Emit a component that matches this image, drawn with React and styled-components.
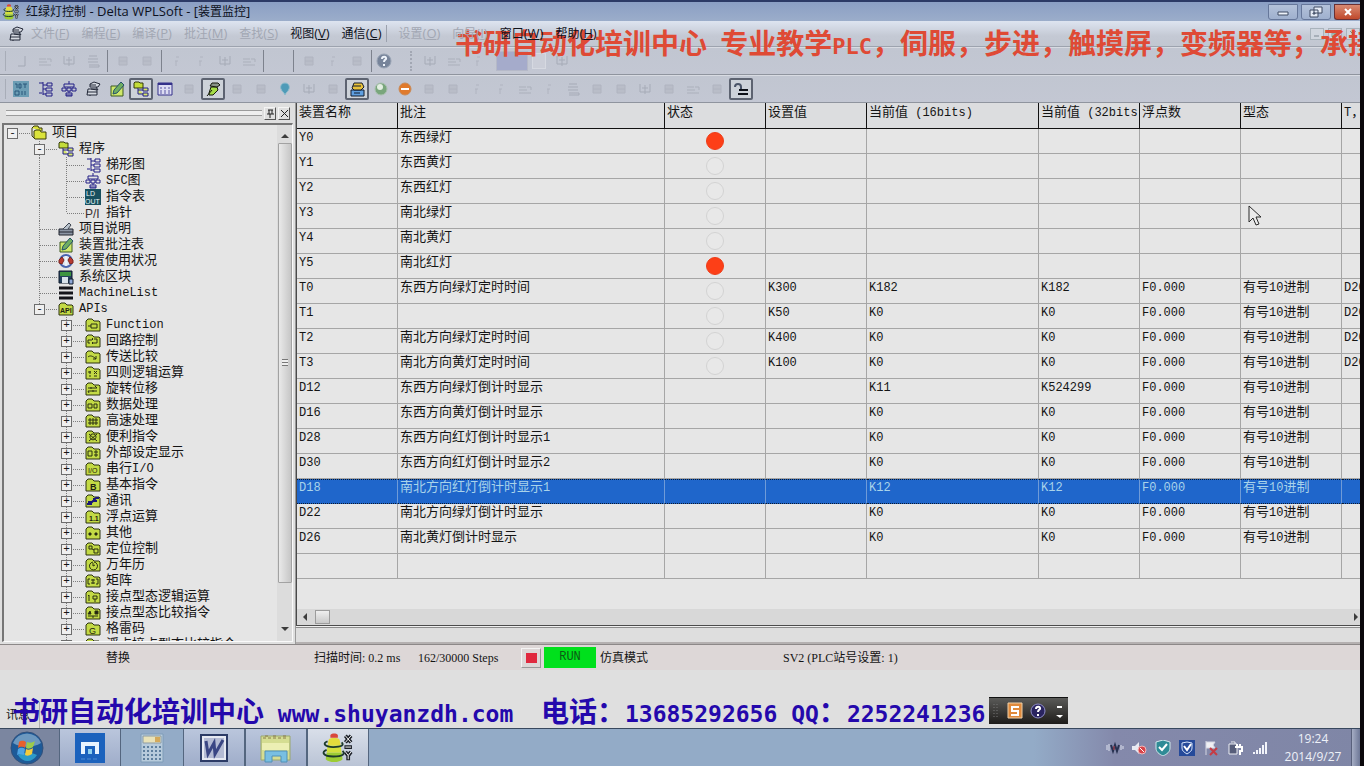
import React from 'react'
import styled, { createGlobalStyle, css } from 'styled-components'

const SONG = `'Liberation Mono', 'Noto Sans CJK SC', monospace`
const BOLD = `'DejaVu Sans Mono', 'Noto Sans CJK SC', monospace`
const UI = `'Open Sans', 'Noto Sans CJK SC', sans-serif`
const TIMES = `'Liberation Serif', 'Noto Sans CJK SC', serif`

/* ---------- data ---------- */

const menus = [
    { label: '文件', keyName: 'F', off: true },
    { label: '编程', keyName: 'E', off: true },
    { label: '编译', keyName: 'P', off: true },
    { label: '批注', keyName: 'M', off: true },
    { label: '查找', keyName: 'S', off: true },
    { label: '视图', keyName: 'V' },
    { label: '通信', keyName: 'C', split: true },
    { label: '设置', keyName: 'O', off: true },
    { label: '向导', keyName: 'I', off: true },
    { label: '窗口', keyName: 'W' },
    { label: '帮助', keyName: 'H' },
]

const tree = {
    label: '项目',
    icon: 'folders',
    children: [
        {
            label: '程序',
            icon: 'program',
            children: [
                { label: '梯形图', icon: 'ladder' },
                { label: 'SFC图', icon: 'sfc' },
                { label: '指令表', icon: 'list' },
                { label: '指针', icon: 'pointer' },
            ],
        },
        { label: '项目说明', icon: 'note' },
        { label: '装置批注表', icon: 'pencil' },
        { label: '装置使用状况', icon: 'usage' },
        { label: '系统区块', icon: 'block' },
        { label: 'MachineList', icon: 'bars' },
        {
            label: 'APIs',
            icon: 'api',
            children: [
                { label: 'Function', icon: 'function' },
                { label: '回路控制', icon: 'loop' },
                { label: '传送比较', icon: 'move' },
                { label: '四则逻辑运算', icon: 'math' },
                { label: '旋转位移', icon: 'shift' },
                { label: '数据处理', icon: 'data' },
                { label: '高速处理', icon: 'fast' },
                { label: '便利指令', icon: 'handy' },
                { label: '外部设定显示', icon: 'display' },
                { label: '串行I/O', icon: 'serial' },
                { label: '基本指令', icon: 'basic' },
                { label: '通讯', icon: 'comm' },
                { label: '浮点运算', icon: 'float' },
                { label: '其他', icon: 'other' },
                { label: '定位控制', icon: 'position' },
                { label: '万年历', icon: 'clock' },
                { label: '矩阵', icon: 'matrix' },
                { label: '接点型态逻辑运算', icon: 'logic' },
                { label: '接点型态比较指令', icon: 'compare' },
                { label: '格雷码', icon: 'gray' },
                { label: '浮点接点型态比较指令', icon: 'compare' },
            ].map((item) => ({ ...item, closed: true })),
        },
    ],
}

const columns = [
    { label: '装置名称', width: 101 },
    { label: '批注', width: 267 },
    { label: '状态', width: 101 },
    { label: '设置值', width: 101 },
    { label: '当前值 (16bits)', width: 172 },
    { label: '当前值 (32bits)', width: 101 },
    { label: '浮点数', width: 101 },
    { label: '型态', width: 101 },
    { label: 'T，' },
]

const F = 'F0.000'
const DEC = '有号10进制'
// name, comment, lamp, preset, 16 bits, 32 bits, float, format, T
const rows = [
    ['Y0', '东西绿灯', 'on', '', '', '', '', '', ''],
    ['Y1', '东西黄灯', 'off', '', '', '', '', '', ''],
    ['Y2', '东西红灯', 'off', '', '', '', '', '', ''],
    ['Y3', '南北绿灯', 'off', '', '', '', '', '', ''],
    ['Y4', '南北黄灯', 'off', '', '', '', '', '', ''],
    ['Y5', '南北红灯', 'on', '', '', '', '', '', ''],
    ['T0', '东西方向绿灯定时时间', 'off', 'K300', 'K182', 'K182', F, DEC, 'D20'],
    ['T1', '', 'off', 'K50', 'K0', 'K0', F, DEC, 'D20'],
    ['T2', '南北方向绿灯定时时间', 'off', 'K400', 'K0', 'K0', F, DEC, 'D20'],
    ['T3', '南北方向黄灯定时时间', 'off', 'K100', 'K0', 'K0', F, DEC, 'D20'],
    ['D12', '东西方向绿灯倒计时显示', '', '', 'K11', 'K524299', F, DEC, ''],
    ['D16', '东西方向黄灯倒计时显示', '', '', 'K0', 'K0', F, DEC, ''],
    ['D28', '东西方向红灯倒计时显示1', '', '', 'K0', 'K0', F, DEC, ''],
    ['D30', '东西方向红灯倒计时显示2', '', '', 'K0', 'K0', F, DEC, ''],
    ['D18', '南北方向红灯倒计时显示1', '', '', 'K12', 'K12', F, DEC, ''],
    ['D22', '南北方向绿灯倒计时显示', '', '', 'K0', 'K0', F, DEC, ''],
    ['D26', '南北黄灯倒计时显示', '', '', 'K0', 'K0', F, DEC, ''],
    ['', '', '', '', '', '', '', '', ''],
]
const SELECTED = 'D18'

const fileTools = [
    ['new', 'open', 'save', 'print'],
    ['lines', 'lines'],
    ['dot', 'dot', 'save', 'open'],
    ['blank'],
    ['lines', 'dot', 'lines'],
    ['help'],
]
const viewTools = [
    'code', 'ladder', 'sfc', 'monitor', 'pencil', 'program!', 'grid', 'lines', 'pen!',
    'lines', 'lines', 'drop', 'save', 'lines', 'device!', 'run', 'stop', 'lines',
    'lines', 'dot', 'dot', 'open', 'dot', 'print', 'lines', 'lines', 'save',
    'lines', 'open', 'lines', 'contact!',
]

/* ---------- drawings ---------- */

const folderMarks = {
    api: <text x="2" y="12" fontSize="7" fontWeight="700">API</text>,
    function: <path d="M3 9h3M6 7h6v4H6z" />,
    loop: <path d="M5 10H3V7h4M9 6h3v4H8M7 9l1 1-1 1M8 5L7 6l1 1" />,
    move: <path d="M3 8c2-2 5-1 8 2M11 7v3H8" />,
    math: <path d="M3 7h3M5 6v3M9 6l3 3M12 6l-3 3M4 11h2M9 11h3" />,
    shift: <path d="M3 7h9M10 5l2 2M3 10h9M4 12l-1-2M6 6v2M8 9v2" />,
    data: <path d="M3 7h4v4H3zM9 7h3v4H9z" />,
    fast: <path d="M3 7h10M3 10h10M5 5v7M8 5v7M11 5v7" />,
    handy: <path d="M7 5a3 3 0 1 0 2 0zM4 5l8 7M12 5l-8 7" />,
    display: <path d="M3 6h4v5H3zM9 7h4M9 10h4M11 5v7" />,
    serial: <text x="3" y="12" fontSize="7">I/O</text>,
    basic: <text x="5" y="13" fontSize="9" fontWeight="700">B</text>,
    comm: <path d="M2 11h3l3-3 3-3h3M3 9h3v3M9 5v3h3" stroke="#1b1878" strokeWidth="2" />,
    float: <text x="4" y="12" fontSize="7" fontWeight="700">1.1</text>,
    other: <path d="M4 8h2v2H4zM10 8h2v2h-2z" fill="#221" />,
    position: <path d="M4 5h3v3H4zM9 8h4v4H9zM7 8l2 1" />,
    clock: <path d="M8 5a4 4 0 1 0 1 0M8 6v3l2-1" />,
    matrix: <path d="M5 6H3v5h2M11 6h2v5h-2M6 7h4M6 10h4M8 6v5" />,
    logic: <path d="M4 6v6M4 6L3 7M8 7h4v3H8zM10 10v3" />,
    compare: <path d="M3 9l2-3 1 3zM10 6h3v3h-3zM3 11h10M8 11v2" fill="#221" />,
    gray: <text x="4" y="13" fontSize="9">G</text>,
}

const ladderArt = (
    <path d="M2 2h4M6 1v13M6 4h4M10 2h5v3h-5zM6 8h3M9 7h6v3H9zM6 13h3M9 12h6v3H9zM2 12h3" stroke="#231f86" fill="none" />
)
const sfcArt = (
    <path d="M8 0v3M3 3h10v3H3zM1 7h4v3H1zM6 7h4v3H6zM11 7h4v3h-4zM8 10v2M5 12h6v3H5zM5 14h6" stroke="#231f86" fill="none" />
)
const pencilArt = (
    <>
        <path d="M2 5h12v10H2z" fill="#cfe86a" stroke="#3c5a20" />
        <path d="M4 13l1-4 7-8 3 3-7 8z" fill="#6fae62" stroke="#24506a" />
    </>
)
const programArt = (
    <>
        <path d="M1 2l1-1h4l1 1h3v5H1z" fill="#c4dc3a" stroke="#33390c" />
        <path d="M5 7v6h5M5 9h5M10 7h5v3h-5zM10 12h5v3h-5z" fill="#d8e86a" stroke="#231f86" />
    </>
)
const monitorArt = (
    <>
        <path d="M3 8h9v6H2zM5 6h8l2-3-6-2-4 2z" fill="#d6dae2" stroke="#222838" />
        <path d="M5 4h6M6 8l6 1M2 11h10M5 14v1M11 6l2 3" stroke="#222838" fill="none" />
    </>
)

const drawings = {
    ladder: ladderArt,
    sfc: sfcArt,
    pencil: pencilArt,
    program: programArt,
    monitor: monitorArt,
    folders: (
        <path d="M1 3l2-2h4l1 2h3v3M1 3v8l2 2V6l2-1h4l1 2h5v7H4l-3-3" fill="#dbe33a" stroke="#3a3b08" />
    ),
    list: (
        <>
            <path d="M0 0h16v16H0z" fill="#17505f" />
            <text x="1" y="7" fontSize="7" fontFamily="Liberation Sans" fill="#e6f4f4">LD</text>
            <text x="0" y="15" fontSize="7" fontFamily="Liberation Sans" fill="#e6f4f4">OUT</text>
        </>
    ),
    pointer: <text x="0" y="13" fontSize="12" fontFamily="Liberation Sans" fill="#3a3030">P/I</text>,
    note: (
        <>
            <path d="M1 8h14v6H1zM1 11h14" fill="#8b95a4" stroke="#20242e" />
            <path d="M5 8l6-6 2 2-3 4" fill="#b8c2cc" stroke="#3c4450" />
        </>
    ),
    usage: (
        <>
            <circle cx="8" cy="8" r="6" fill="#dfe6f2" stroke="#4a64b0" strokeWidth="2" />
            <path d="M1 7l3-3 2 3-2 4-3-1zM15 7l-3-3-2 3 2 4 3-1z" fill="#b83a32" stroke="#7a2620" />
            <path d="M8 3v10" stroke="#fff" />
        </>
    ),
    block: (
        <>
            <path d="M1 2h13v12H1z" fill="#24405e" stroke="#101c2c" />
            <path d="M2 3h11v4H2z" fill="#3c9440" />
            <path d="M4 8h6v6H4z" fill="#d8e2ea" />
            <path d="M11 10h4v5h-4z" fill="#8fa8d8" stroke="#101c2c" />
        </>
    ),
    bars: <path d="M1 3h14M1 8h14M1 13h14" stroke="#15151a" strokeWidth="3" />,
    code: (
        <>
            <path d="M0 0h16v16H0z" fill="#6c9db4" />
            <path d="M2 3h2v4M6 3h2v4H6zM10 3h4M12 3v4M2 10h4v4H2zM9 10v4M12 10v4" stroke="#29567a" fill="none" />
        </>
    ),
    grid: (
        <>
            <path d="M1 2h14v12H1z" fill="#dcdcf2" stroke="#34318a" />
            <path d="M1 3h14" stroke="#34318a" strokeWidth="2" />
            <path d="M3 7h10M3 10h10M3 12h10" stroke="#5a57a4" strokeDasharray="2 2" />
        </>
    ),
    pen: (
        <>
            <path d="M4 12l2-6h6l1 3-5 5H4z" fill="#a4dc46" stroke="#15180c" />
            <path d="M5 5l2-3h6l2 2-3 2z" fill="#8a9488" stroke="#15180c" />
            <path d="M2 15l5-6" stroke="#15180c" fill="none" />
        </>
    ),
    drop: <path d="M8 2c4 0 5 4 4 6-1 3-3 3-4 6-1-3-3-3-4-6C3 6 4 2 8 2z" fill="#4f9bb8" stroke="#8fbccc" />,
    device: (
        <>
            <path d="M2 9h13v6H2z" fill="#5f9fe0" stroke="#141c2c" />
            <path d="M3 7l2-5h8l2 4-3 3H5z" fill="#e8c23a" stroke="#141c2c" />
            <path d="M4 5h8M5 12h6" stroke="#141c2c" />
        </>
    ),
    run: (
        <>
            <circle cx="8" cy="8" r="6" fill="#79a67c" stroke="#a8bfae" />
            <circle cx="7" cy="6" r="3" fill="#e3efe2" />
        </>
    ),
    stop: (
        <>
            <circle cx="8" cy="8" r="6" fill="#e07a2c" stroke="#c98a58" />
            <path d="M4 8h8" stroke="#fff" strokeWidth="2" />
        </>
    ),
    contact: (
        <>
            <path d="M2 6c0-4 6-4 6 0v2" fill="none" stroke="#4a5468" strokeWidth="2" />
            <path d="M6 9h9M5 13h10" stroke="#0d1018" strokeWidth="2" />
        </>
    ),
    help: (
        <>
            <circle cx="8" cy="8" r="7" fill="#77849a" stroke="#98a3b4" />
            <path d="M6 6c0-3 5-3 4 0-1 1-2 1-2 3M8 11v2" stroke="#eef3fa" strokeWidth="2" fill="none" />
        </>
    ),
    // greyed commands
    new: <path d="M12 3v10H5" fill="none" stroke="#a3a8b4" />,
    open: <path d="M2 6h7M2 9h8M2 12h12M10 6h4v3" fill="none" stroke="#abb0bb" />,
    save: <path d="M3 3v8h10V3M8 4v9M5 7h6" fill="none" stroke="#a6abb7" />,
    print: <path d="M4 3h8M3 6h10M3 9h10M4 12h10v2H4" fill="none" stroke="#a6abb7" />,
    lines: <path d="M4 4h8v8H4zM4 8h8" fill="#b9bdc8" stroke="#b0b4c0" />,
    dot: <path d="M7 4h3M6 8h3M7 8v5" fill="none" stroke="#b0b4c0" />,
    blank: null,
}

const Icon = ({ name }) => (
    <Glyph viewBox="0 0 16 16" aria-hidden="true">
        {name in folderMarks ? (
            <>
                <path d="M1 4l2-2h4l2 2h5l1 1v9H1z" fill="#c3da45" stroke="#2c3310" />
                <Mark>{folderMarks[name]}</Mark>
            </>
        ) : (
            drawings[name]
        )}
    </Glyph>
)

const WplLogo = () => (
    <Logo viewBox="0 0 36 32" aria-hidden="true">
        <path d="M8 8c0-4 12-4 12 0l1 5H7z" fill="#e3dc3c" />
        <path d="M7 13h14l1 8H6z" fill="#d3e03c" />
        <path d="M6 21h16l1 7c-3 4-15 4-18 0z" fill="#9ccc34" />
        <path d="M10 2c2-2 6-2 8 0v3h-8z" fill="#d8483a" />
        <path d="M7 9c-6 2-3 6 6 6s12-2 9-5M6 18c-6 2-4 7 7 7s13-3 10-6" fill="none" stroke="#1d3a2c" strokeWidth="2" />
        <path d="M26 3l6 7M32 3l-6 7M25 15h8M26 20l3 4 3-4M29 24v5" fill="none" stroke="#1c2028" strokeWidth="4" />
        <path d="M26 3l6 7M32 3l-6 7M26 15h6M26 20l3 4 3-4M29 24v4" fill="none" stroke="#fff" />
    </Logo>
)

const StartOrb = () => (
    <Logo viewBox="0 0 34 34" aria-hidden="true">
        <circle cx="17" cy="17" r="16" fill="#1d5a98" stroke="#33507a" />
        <path d="M3 12a15 15 0 0 1 28 0c-8 5-20 5-28 0z" fill="#8fb2d0" opacity="0.7" />
        <path d="M8 24c5 8 14 8 19 0-6-3-13-3-19 0z" fill="#35b6de" opacity="0.7" />
        <path d="M9 11c3-2 5-1 7 0l-1 6c-3-2-5-1-7 0z" fill="#e8602c" />
        <path d="M17 11c3 1 5 1 8-1l-2 6c-3 2-5 2-7 1z" fill="#9ccc4a" />
        <path d="M8 18c2-1 4-2 7 0l-1 6c-3-1-5-1-7 0z" fill="#4ea4e4" />
        <path d="M16 18c2 1 4 1 7-1l-1 6c-3 2-5 2-7 1z" fill="#f4cc3c" />
    </Logo>
)

const MaxthonLogo = () => (
    <Logo viewBox="0 0 30 30" aria-hidden="true">
        <path d="M0 0h30v30H0z" fill="#1b62bd" />
        <path d="M6 9h18v12h-4v-8H10v8H6z" fill="#e8f4ff" />
        <path d="M13 21v-5h4v5z" fill="#8fd0ee" />
        <path d="M6 26h18" stroke="#4d8ad2" strokeDasharray="4 2" />
    </Logo>
)

const CalcLogo = () => (
    <Logo viewBox="0 0 24 30" aria-hidden="true">
        <path d="M1 1h22v28H1z" fill="#b7cbdc" stroke="#7f9cb8" />
        <path d="M3 3h18v7H3z" fill="#e9e2b8" stroke="#8c9ba4" />
        <path d="M15 4h5v5h-5z" fill="#d3a95c" />
        <path d="M3 14h18M3 18h18M3 22h18M3 26h18" stroke="#5e7f9e" strokeWidth="2" strokeDasharray="2 2" />
    </Logo>
)

const WordLogo = () => (
    <Logo viewBox="0 0 30 30" aria-hidden="true">
        <path d="M2 2h26v26H2z" fill="#e6e9f2" stroke="#2c3b66" strokeWidth="2" />
        <path d="M5 5h20v20H5z" fill="#b4bbd4" />
        <path d="M7 8l2 13 6-11 1 11 8-14" fill="none" stroke="#3a4684" strokeWidth="3" />
    </Logo>
)

const ExplorerLogo = () => (
    <Logo viewBox="0 0 34 30" aria-hidden="true">
        <path d="M2 3h29v24H2z" fill="#d5dd92" stroke="#9aa76c" />
        <path d="M4 5h25M6 3h3M14 3h3M24 3h3" stroke="#8a7a4c" strokeDasharray="3 2" />
        <path d="M3 10h27v7H3z" fill="#ecefb4" />
        <path d="M6 29V18h22v11h-6v-6h-9v6z" fill="#78bfe2" stroke="#5190b8" />
    </Logo>
)

/* ---------- text helper: latin runs are narrower than the hanzi ---------- */

const Mixed = ({ children, size = 12 }) =>
    String(children)
        .split(/([\x20-\x7e]+)/)
        .filter(Boolean)
        .map((run, i) =>
            /^[\x20-\x7e]/.test(run) ? (
                <Latin key={i} $size={size}>{run}</Latin>
            ) : (
                <span key={i}>{run}</span>
            )
        )

/* ---------- tree ---------- */

const TreeNode = ({ node, trail, last, root }) => (
    <li>
        <TreeRow>
            {trail.map((line, i) => (
                <Guide key={i} $line={line} />
            ))}
            <Elbow $root={root} $last={last}>
                {(node.children || node.closed) && (
                    <Expander aria-label={node.label}>{node.closed ? '+' : '-'}</Expander>
                )}
            </Elbow>
            <Icon name={node.icon} />
            <TreeLabel>
                <Mixed>{node.label}</Mixed>
            </TreeLabel>
        </TreeRow>
        {node.children && (
            <TreeList>
                {node.children.map((child, i) => (
                    <TreeNode
                        key={child.label}
                        node={child}
                        trail={[...trail, !root && !last]}
                        last={i === node.children.length - 1}
                    />
                ))}
            </TreeList>
        )}
    </li>
)

function ProjectPanel() {
    return (
        <Side>
            <SideHead>
                <SideGrip />
                <TinyButton aria-label="固定">
                    <svg width="9" height="9" viewBox="0 0 9 9"><path d="M2 1h5M3 1v4M6 1v4M1 5h7M4 5v4" stroke="#222" fill="none" /></svg>
                </TinyButton>
                <TinyButton aria-label="关闭">
                    <svg width="9" height="9" viewBox="0 0 9 9"><path d="M1 1l7 7M8 1l-7 7" stroke="#222" /></svg>
                </TinyButton>
            </SideHead>
            <TreeBox>
                <TreeScroll>
                    <TreeList>
                        <TreeNode node={tree} trail={[]} root last />
                    </TreeList>
                </TreeScroll>
                <VBar>
                    <Arrow $dir="up" />
                    <VThumb><i /></VThumb>
                    <Arrow $dir="down" />
                </VBar>
            </TreeBox>
        </Side>
    )
}

/* ---------- device monitor ---------- */

function Monitor() {
    return (
        <MonitorPane>
            <TableArea>
                <Table>
                    <colgroup>
                        {columns.map((c) => (
                            <Col key={c.label} $width={c.width} />
                        ))}
                    </colgroup>
                    <thead>
                        <tr>
                            {columns.map((c) => (
                                <Th key={c.label} scope="col"><Mixed>{c.label}</Mixed></Th>
                            ))}
                        </tr>
                    </thead>
                    <tbody>
                        {rows.map((row) => (
                            <Tr key={row[0]} $selected={row[0] === SELECTED}>
                                {row.map((cell, i) =>
                                    i === 2 ? (
                                        <LampCell key={i}>
                                            {cell && <Lamp $on={cell === 'on'} />}
                                        </LampCell>
                                    ) : (
                                        <Td key={i}><Mixed>{cell}</Mixed></Td>
                                    )
                                )}
                            </Tr>
                        ))}
                    </tbody>
                </Table>
            </TableArea>
            <HBar>
                <Arrow $dir="left" />
                <HThumb />
                <Spacer />
                <Arrow $dir="right" />
            </HBar>
            <PaneFoot />
        </MonitorPane>
    )
}

/* ---------- window chrome ---------- */

function TopBars() {
    return (
        <Chrome>
            <TitleBar>
                <TitleIcon><WplLogo /></TitleIcon>
                <Title><Mixed size={13}>红绿灯控制 - Delta WPLSoft - [装置监控]</Mixed></Title>
                <WindowButton aria-label="最小化">
                    <svg width="12" height="10" viewBox="0 0 12 10"><path d="M1 5h10v3H1z" fill="#eef3fa" stroke="#3e4a62" /></svg>
                </WindowButton>
                <WindowButton aria-label="还原">
                    <svg width="14" height="12" viewBox="0 0 14 12"><path d="M5 1h8v6H5zM1 4h8v7H1zM4 7h2v1H4z" fill="#e4eaf4" stroke="#3e4a62" /></svg>
                </WindowButton>
                <WindowButton $close aria-label="关闭">
                    <svg width="10" height="10" viewBox="0 0 10 10"><path d="M2 2l6 6M8 2l-6 6" stroke="#fff" strokeWidth="2" /></svg>
                </WindowButton>
            </TitleBar>
            <MenuBar>
                <Icon name="monitor" />
                {menus.map((m) => (
                    <MenuItem key={m.keyName} disabled={m.off} $split={m.split}>
                        {m.label}<Latin $size={13}>(<u>{m.keyName}</u>)</Latin>
                    </MenuItem>
                ))}
                <Spacer />
                <ChildButtons>
                    <ChildButton aria-label="最小化子窗口">
                        <svg width="8" height="8" viewBox="0 0 8 8"><path d="M1 6h5" stroke="#7e8994" /></svg>
                    </ChildButton>
                    <ChildButton aria-label="还原子窗口">
                        <svg width="8" height="8" viewBox="0 0 8 8"><path d="M3 1h4v4H3zM1 3h4v4H1z" fill="none" stroke="#7fa09c" /></svg>
                    </ChildButton>
                    <ChildButton aria-label="关闭子窗口">
                        <svg width="8" height="8" viewBox="0 0 8 8"><path d="M1 1l6 6M7 1L1 7" stroke="#7e8994" /></svg>
                    </ChildButton>
                </ChildButtons>
            </MenuBar>
            <ToolBar>
                <Grip />
                {fileTools.map((group, i) => (
                    <ToolGroup key={i}>
                        {group.map((name, j) => (
                            <ToolButton key={j} aria-label={name}><Icon name={name} /></ToolButton>
                        ))}
                    </ToolGroup>
                ))}
                <Grip $wide />
                <ToolButton aria-label="step"><Icon name="save" /></ToolButton>
                <ToolButton aria-label="next"><Icon name="open" /></ToolButton>
                <ToolButton aria-label="prev"><Icon name="dot" /></ToolButton>
                <Picker />
                <PickerArrow />
                <ToolButton aria-label="find"><Icon name="save" /></ToolButton>
            </ToolBar>
            <ToolBar>
                <Grip />
                {viewTools.map((name, i) => (
                    <ToolButton key={i} aria-label={name.replace('!', '')} $pressed={name.endsWith('!')}>
                        <Icon name={name.replace('!', '')} />
                    </ToolButton>
                ))}
            </ToolBar>
            <Marquee>
                <Mixed size={22}>书研自动化培训中心 专业教学PLC，伺服，步进，触摸屏，变频器等；承接</Mixed>
            </Marquee>
        </Chrome>
    )
}

function Status() {
    return (
        <>
            <StatusBar>
                <StatusField $width={208}>替换</StatusField>
                <StatusField $width={104}>扫描时间: 0.2 ms</StatusField>
                <StatusField $width={103}>162/30000 Steps</StatusField>
                <Record aria-label="停止"><i /></Record>
                <Run>RUN</Run>
                <StatusField $width={183}>仿真模式</StatusField>
                <StatusField>SV2 (PLC站号设置: 1)</StatusField>
            </StatusBar>
            <MessageArea>
                <MessageTab>讯息</MessageTab>
                <Banner>
                    <Mixed size={23}>书研自动化培训中心 www.shuyanzdh.com  电话：13685292656 QQ：2252241236</Mixed>
                </Banner>
                <ImeBar>
                    <svg width="79" height="26" viewBox="0 0 79 26" aria-hidden="true">
                        <path d="M5 6v14M8 6v14" stroke="#777" strokeDasharray="1 2" />
                        <path d="M19 5h14v15H19z" fill="#e08a3c" stroke="#f0d0a8" />
                        <path d="M30 9h-7v4h6v4h-7" fill="none" stroke="#fff" strokeWidth="2" />
                        <circle cx="49" cy="13" r="7" fill="#2a2460" stroke="#8e8cc8" />
                        <path d="M47 11c0-3 5-3 4 0-1 1-2 1-2 3M49 16v2" fill="none" stroke="#fff" strokeWidth="2" />
                        <path d="M68 9h5" stroke="#fff" strokeWidth="2" />
                        <path d="M67 17h7l-3 3z" fill="#fff" />
                    </svg>
                </ImeBar>
            </MessageArea>
        </>
    )
}

function TaskBar() {
    return (
        <Bar>
            <Start aria-label="开始"><StartOrb /></Start>
            <Task $lit aria-label="Maxthon"><MaxthonLogo /></Task>
            <Task $flat aria-label="计算器"><CalcLogo /></Task>
            <Task $lit aria-label="Word"><WordLogo /></Task>
            <Task $lit aria-label="资源管理器"><ExplorerLogo /></Task>
            <Task $active aria-label="WPLSoft"><WplLogo /></Task>
            <Spacer />
            <Tray>
                <svg width="18" height="16" viewBox="0 0 18 16"><path d="M1 5v5M3 4v7M15 5v5M17 6v3" stroke="#dfe3f0" /><path d="M5 5l2 6 2-6 2 6 2-6" fill="none" stroke="#273050" strokeWidth="2" /><path d="M8 6v4" stroke="#c2424a" /></svg>
                <svg width="18" height="16" viewBox="0 0 18 16"><path d="M2 6h3l4-4v12l-4-4H2z" fill="#e8eaf2" /><circle cx="12" cy="10" r="4" fill="#d8444a" stroke="#f2b8ba" /><path d="M10 8l4 4" stroke="#fff" /></svg>
                <svg width="18" height="16" viewBox="0 0 18 16"><path d="M2 2l7-2 7 2v6c0 4-3 6-7 8-4-2-7-4-7-8z" fill="#2f8b96" stroke="#cfe6ea" /><path d="M5 7l3 3 5-6" fill="none" stroke="#fff" strokeWidth="2" /></svg>
                <svg width="18" height="16" viewBox="0 0 18 16"><path d="M1 0h16v16H1z" fill="#254a9a" /><path d="M4 3l5-1 5 1v5c0 3-2 4-5 6-3-2-5-3-5-6z" fill="none" stroke="#d4e2fa" /><path d="M6 6l3 4 4-6" fill="none" stroke="#fff" strokeWidth="2" /></svg>
                <svg width="18" height="16" viewBox="0 0 18 16"><path d="M4 1v14M4 2h9l-2 3 2 3H4" fill="#f0f0f4" stroke="#d4d6e2" /><path d="M8 8l7 7M15 8l-7 7" stroke="#c63c44" strokeWidth="2" /></svg>
                <svg width="18" height="16" viewBox="0 0 18 16"><path d="M3 4h8v10H3zM5 2h4v2" fill="#565d7a" stroke="#eceef4" /><path d="M9 7h7v4h-2v4M11 4v3M14 4v3" fill="none" stroke="#fff" strokeWidth="2" /></svg>
                <svg width="18" height="16" viewBox="0 0 18 16"><path d="M4 14v-2M7 14v-4M10 14V8M13 14V5M16 14V2" stroke="#f2f4fa" strokeWidth="2" /></svg>
            </Tray>
            <Clock>
                <span>19:24</span>
                <span>2014/9/27</span>
            </Clock>
            <ShowDesktop aria-label="显示桌面" />
        </Bar>
    )
}

function App() {
    return (
        <Screen>
            <GlobalStyle />
            <TopBars />
            <Main>
                <ProjectPanel />
                <Monitor />
                <Pointer viewBox="0 0 14 22" aria-hidden="true">
                    <path d="M1 1v16l4-4 3 7 3-1-3-7h5z" fill="#ececec" stroke="#2a2a2a" />
                </Pointer>
            </Main>
            <Status />
            <TaskBar />
        </Screen>
    )
}

/* ---------- styles ---------- */

const GlobalStyle = createGlobalStyle`
    * { box-sizing: border-box; }
    body { margin: 0; background: #0a070b; }
    button { padding: 0; border: 0; background: none; font: inherit; color: inherit; }
    ul { margin: 0; padding: 0; list-style: none; }
    svg { display: block; flex: none; }
`

const Screen = styled.div`
    display: flex;
    flex-direction: column;
    height: 100vh;
    margin-right: 4px;
    overflow: hidden;
    background: #dedede;
    color: #141414;
    font: 12px/16px ${UI};
`
const Spacer = styled.div`
    flex: 1;
`
const Latin = styled.span`
    font-size: ${(p) => p.$size}px;
    white-space: pre;
`
const Glyph = styled.svg`
    width: 16px;
    height: 16px;
`
const Mark = styled.g`
    fill: none;
    stroke: #2b3012;
    text {
        font-family: 'Liberation Sans', sans-serif;
        fill: #222211;
        stroke: none;
    }
`
const Logo = styled.svg`
    height: 30px;
`

const Chrome = styled.header`
    position: relative;
    overflow: hidden;
    flex: none;
`
const TitleBar = styled.div`
    display: flex;
    align-items: center;
    height: 21px;
    padding-left: 2px;
    border-top: 2px solid #2c3a66;
    background: linear-gradient(#8b9fc4, #9badca);
`
const TitleIcon = styled.span`
    width: 24px;
    svg { height: 16px; }
`
const Title = styled.h1`
    flex: 1;
    margin: 0;
    font: 12px/16px ${UI};
    color: #0c1020;
`
const WindowButton = styled.button`
    display: grid;
    place-items: center;
    width: 30px;
    height: 16px;
    margin-left: 3px;
    border: 1px solid #66779a;
    border-radius: 0 0 3px 3px;
    background: ${(p) => (p.$close ? 'linear-gradient(#d98a72, #c0492c)' : 'linear-gradient(#b4c2da, #9fb0ce)')};
    ${(p) => p.$close && css`
        width: 26px;
        border-color: #6a3034;
        border-right: 0;
    `}
`
const MenuBar = styled.nav`
    display: flex;
    align-items: center;
    gap: 12px;
    height: 26px;
    padding-left: 8px;
    border-bottom: 1px solid #9da3ae;
    background: linear-gradient(#dde4f0, #c4c9d4 60%, #c2c7d1);
    > svg { margin-right: -5px; }
`
const MenuItem = styled.button`
    position: relative;
    z-index: 1;
    color: #10131c;
    white-space: nowrap;
    &:disabled {
        color: #a2a7b3;
    }
    ${(p) => p.$split && css`
        padding-right: 4px;
        border-right: 1px solid #9ba1ad;
    `}
`
const ChildButtons = styled.div`
    display: flex;
    gap: 4px;
`
const ChildButton = styled.button`
    display: grid;
    place-items: center;
    width: 14px;
    height: 12px;
    border: 1px solid #a9b3bc;
    background: #d0d6df;
`
const ToolBar = styled.div`
    display: flex;
    align-items: center;
    height: 28px;
    padding-left: 5px;
    border-top: 1px solid #d8dbe2;
    border-bottom: 1px solid #8f949e;
    background: linear-gradient(#c1c6d1, #c3c7d3);
`
const Grip = styled.span`
    width: 4px;
    height: 20px;
    border-left: 1px solid #a8adb8;
    ${(p) => p.$wide && css`
        width: 8px;
        margin-left: 14px;
        border-left: 2px dotted #a2a7b3;
    `}
`
const ToolGroup = styled.div`
    display: flex;
    & + & {
        margin-left: 2px;
        padding-left: 3px;
        border-left: 1px solid #7d828d;
    }
    &:nth-of-type(6) {
        padding-left: 0;
    }
`
const ToolButton = styled.button`
    display: grid;
    place-items: center;
    width: 24px;
    height: 22px;
    ${(p) => p.$pressed && css`
        border: 2px solid #5d6371;
        border-radius: 2px;
        background: #cdd2d9;
    `}
`
const Picker = styled.span`
    width: 32px;
    height: 20px;
    margin-left: 6px;
    border: 1px solid #b5b9c8;
    background: #a5abcb;
`
const PickerArrow = styled.span`
    width: 14px;
    height: 16px;
    margin: 0 4px;
    border: 1px solid #d6d9e1;
    background: #cbced8;
`
const Marquee = styled.div`
    position: absolute;
    top: 25px;
    left: 455px;
    color: #df4a35;
    font: 700 28px/40px ${BOLD};
    white-space: nowrap;
`

const Main = styled.main`
    position: relative;
    display: flex;
    flex: 1;
    min-height: 0;
`
const Side = styled.aside`
    display: flex;
    flex-direction: column;
    width: 296px;
    flex: none;
    padding: 0 2px 2px;
    border-right: 1px solid #9a9a9a;
    background: #dfdfdf;
`
const SideHead = styled.div`
    display: flex;
    align-items: center;
    gap: 2px;
    height: 20px;
    padding: 0 3px 0 4px;
`
const SideGrip = styled.div`
    flex: 1;
    height: 6px;
    border: 1px solid #9c9c9c;
    border-width: 1px 0;
    background: #efefef;
`
const TinyButton = styled.button`
    display: grid;
    place-items: center;
    width: 12px;
    height: 13px;
    border: 1px solid #f4f4f4;
    border-right-color: #555;
    border-bottom-color: #555;
`
const TreeBox = styled.div`
    display: flex;
    flex: 1;
    min-height: 0;
    border: 2px solid #767676;
    border-right: 1px solid #fafafa;
    border-bottom: 1px solid #fafafa;
    background: #e5e5e5;
`
const TreeScroll = styled.div`
    flex: 1;
    overflow: hidden;
    padding-left: 3px;
`
const TreeList = styled.ul`
    font: 13px/16px ${SONG};
`
const TreeRow = styled.div`
    display: flex;
    align-items: center;
    height: 16px;
`
const Guide = styled.span`
    width: 22px;
    height: 16px;
    margin-left: 5px;
    border-left: 1px dotted ${(p) => (p.$line ? '#7d7d7d' : 'transparent')};
`
const Elbow = styled.span`
    display: flex;
    align-items: center;
    width: 24px;
    height: 16px;
    background:
        repeating-linear-gradient(90deg, #7d7d7d 0 1px, transparent 1px 2px) 6px 8px / 18px 1px no-repeat,
        repeating-linear-gradient(#7d7d7d 0 1px, transparent 1px 2px) 5px 0 / 1px
            ${(p) => (p.$root ? 0 : p.$last ? 8 : 16)}px no-repeat;
`
const Expander = styled.button`
    width: 11px;
    height: 11px;
    border: 1px solid #6d6d6d;
    background: #efefef;
    font: 11px/8px ${SONG};
    text-align: center;
`
const TreeLabel = styled.span`
    margin-left: 5px;
    white-space: nowrap;
`
const VBar = styled.div`
    display: flex;
    flex-direction: column;
    align-items: center;
    justify-content: space-between;
    width: 15px;
    padding: 5px 0 6px;
    background: #dcdcdc;
`
const VThumb = styled.div`
    display: grid;
    place-items: center;
    width: 14px;
    height: 440px;
    margin-bottom: 40px;
    border: 1px solid #a2a2a2;
    border-radius: 1px;
    background: linear-gradient(90deg, #e9e9e9, #c6c6c6);
    i {
        width: 6px;
        height: 7px;
        background: repeating-linear-gradient(#777 0 1px, #eee 1px 3px);
    }
`
const edges = { up: 'bottom', down: 'top', left: 'right', right: 'left' }
const Arrow = styled.i`
    width: 0;
    height: 0;
    border: 4px solid transparent;
    border-${(p) => edges[p.$dir]}-color: #3c3c3c;
    border-${(p) => p.$dir}-width: 0;
`

const MonitorPane = styled.section`
    display: flex;
    flex-direction: column;
    flex: 1;
    min-width: 0;
    border-left: 1px solid #4a4a4a;
    background: #e6e6e6;
`
const TableArea = styled.div`
    flex: 1;
    min-height: 0;
    overflow: hidden;
`
const Table = styled.table`
    width: 100%;
    table-layout: fixed;
    border-collapse: separate;
    border-spacing: 0;
    font: 13px/17px ${SONG};
`
const Col = styled.col`
    width: ${(p) => (p.$width ? `${p.$width}px` : 'auto')};
`
const cell = css`
    padding: 0 0 0 2px;
    overflow: hidden;
    text-align: left;
    vertical-align: top;
    white-space: nowrap;
    &:last-child {
        border-right: 0;
    }
`
const Th = styled.th`
    height: 26px;
    border-right: 1px solid #111;
    border-bottom: 1px solid #111;
    background: #dcdddf;
    font-weight: 400;
    ${cell}
    padding-top: 1px;
`
const Td = styled.td`
    height: 25px;
    border-right: 1px solid #a6a6a6;
    border-bottom: 1px solid #a6a6a6;
    ${cell}
`
const LampCell = styled(Td)`
    padding: 0;
    vertical-align: middle;
`
const Lamp = styled.i`
    display: block;
    width: 18px;
    height: 18px;
    margin: 0 auto;
    border-radius: 50%;
    border: 1px solid ${(p) => (p.$on ? '#ee3c18' : '#d3d3d3')};
    background: ${(p) => (p.$on ? '#fd3f17' : '#e8e8e8')};
`
const Tr = styled.tr`
    ${(p) => p.$selected && css`
        background: #1f66cb;
        color: #a9d3ea;
        ${Td} {
            border-top: 1px dotted #0a1a30;
            border-bottom: 1px dotted #0a1a30;
            border-right-color: #6f9bd8;
            line-height: 16px;
        }
    `}
`
const HBar = styled.div`
    display: flex;
    align-items: center;
    height: 16px;
    padding: 0 2px 0 6px;
    background: #d8d8d8;
`
const HThumb = styled.i`
    width: 15px;
    height: 14px;
    margin-left: 8px;
    border: 1px solid #9c9c9c;
    background: linear-gradient(#efefef, #c9c9c9);
`
const PaneFoot = styled.div`
    height: 19px;
    margin-left: -1px;
    border-top: 1px solid #4c4c4c;
    border-bottom: 2px solid #b4b0b0;
    background: linear-gradient(#f0f0f0 1px, #8d8d8d 1px 2px, #dedede 2px);
`
const Pointer = styled.svg`
    position: absolute;
    top: 102px;
    right: 98px;
    width: 14px;
    height: 22px;
`

const StatusBar = styled.footer`
    display: flex;
    align-items: center;
    height: 26px;
    flex: none;
    padding-left: 106px;
    border-top: 1px solid #8c8888;
    background: #ddd7d7;
    font: 12px/16px ${TIMES};
    white-space: nowrap;
`
const StatusField = styled.span`
    width: ${(p) => (p.$width ? `${p.$width}px` : 'auto')};
`
const Record = styled.button`
    display: grid;
    place-items: center;
    width: 20px;
    height: 20px;
    margin-right: 3px;
    border: 1px solid #f4f4f4;
    border-right-color: #999;
    border-bottom-color: #999;
    i {
        width: 11px;
        height: 10px;
        background: #e0283e;
    }
`
const Run = styled.strong`
    width: 52px;
    height: 21px;
    margin-right: 4px;
    background: #00e01c;
    font: 12px/21px ${SONG};
    text-align: center;
    color: #0b5a14;
`
const MessageArea = styled.div`
    position: relative;
    display: flex;
    align-items: flex-end;
    height: 58px;
    flex: none;
    background: #dfdfdf;
`
const MessageTab = styled.span`
    width: 40px;
    padding: 5px 0 5px 6px;
    border-right: 1px solid #b0b0b0;
`
const Banner = styled.div`
    position: absolute;
    left: 12px;
    bottom: 0;
    color: #2408ac;
    font: 700 28px/28px ${BOLD};
    white-space: nowrap;
`
const ImeBar = styled.div`
    position: absolute;
    left: 989px;
    bottom: 4px;
    border-top: 1px solid #111;
    background: linear-gradient(#5a5a58, #1e1c1a);
`

const Bar = styled.footer`
    display: flex;
    height: 38px;
    flex: none;
    border-top: 1px solid #38485e;
    background: linear-gradient(90deg, #93abc7 0 75%, #93abc7 76%, #8489ab 82%, #7f86a6);
    svg { margin: 0 auto; }
`
const Start = styled.button`
    width: 59px;
    padding-right: 6px;
    background: #7b86a0;
    svg { height: 34px; }
`
const Task = styled.button`
    width: 62px;
    border: 1px solid #54667f;
    border-width: 0 1px;
    background: ${(p) =>
        p.$active ? 'linear-gradient(#d9dfe9, #bac4d6)' : p.$lit ? 'linear-gradient(#bac6dc, #9fadca)' : 'transparent'};
    ${(p) => p.$flat && css`border-color: transparent;`}
`
const Tray = styled.div`
    display: flex;
    align-items: center;
    gap: 6px;
    margin-right: 14px;
`
const Clock = styled.time`
    display: flex;
    flex-direction: column;
    align-items: center;
    justify-content: center;
    width: 62px;
    color: #eef1f8;
    font: 12px/18px ${UI};
`
const ShowDesktop = styled.button`
    width: 9px;
    margin-left: 7px;
    border-left: 1px solid #59617c;
    background: linear-gradient(90deg, #a5adc4, #6d7796);
`

export default App
